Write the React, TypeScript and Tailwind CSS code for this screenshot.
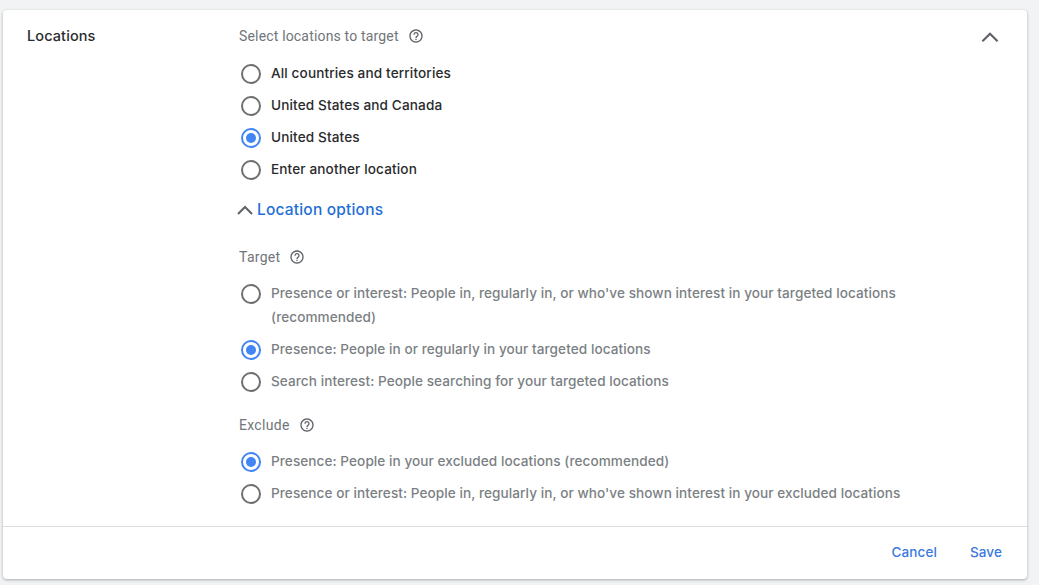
import React from "react";

function Help({ className = "" }: { className?: string }) {
  return (
    <svg width="16" height="16" viewBox="0 0 24 24" className={className} fill="#5f6368">
      <path d="M11 18h2v-2h-2v2zm1-16C6.48 2 2 6.48 2 12s4.48 10 10 10 10-4.48 10-10S17.52 2 12 2zm0 18c-4.41 0-8-3.59-8-8s3.59-8 8-8 8 3.59 8 8-3.59 8-8 8zm0-14c-2.21 0-4 1.79-4 4h2c0-1.1.9-2 2-2s2 .9 2 2c0 2-3 1.75-3 5h2c0-2.25 3-2.5 3-5 0-2.21-1.79-4-4-4z" />
    </svg>
  );
}

function Radio({ on }: { on?: boolean }) {
  return (
    <span
      className={`flex h-5 w-5 shrink-0 items-center justify-center rounded-full border-2 ${
        on ? "border-[#4285f4]" : "border-[#6f6f6f]"
      }`}
    >
      {on && <span className="h-2.5 w-2.5 rounded-full bg-[#4285f4]" />}
    </span>
  );
}

function Option({ label, on, dark }: { label: React.ReactNode; on?: boolean; dark?: boolean }) {
  return (
    <div className="flex items-start gap-[10px] pl-[2px]">
      <div className="flex h-8 items-center pt-[2px]">
        <Radio on={on} />
      </div>
      <div
        className={`py-1 font-['Inter',sans-serif] text-[13.6px] leading-6 font-medium ${
          dark ? "tracking-[0.12px] text-[#2a2b2e]" : "tracking-[0.06px] text-[#7b7f84]"
        }`}
      >
        {label}
      </div>
    </div>
  );
}

function Chevron({ size, stroke = 2 }: { size: number; stroke?: number }) {
  return (
    <svg width={size} height={size} viewBox="0 0 24 24" fill="none" stroke="#5f6368" strokeWidth={stroke}>
      <path d="M5 16l7-7 7 7" />
    </svg>
  );
}

export default function App() {
  return (
    <div className="h-[585px] w-[1039px] overflow-hidden bg-[#f1f3f4] pt-[10px] pl-[3px] font-['Roboto',sans-serif]">
      <div className="flex h-[569px] w-[1024px] flex-col rounded-[4px] bg-white shadow-[0_1px_3px_rgba(60,64,67,0.4)]">
        <div className="flex h-[516px] items-start">
          <div className="w-[236px] pt-[15px] pl-[24px] font-['Inter',sans-serif] text-[14.5px] leading-[22px] tracking-[0.1px] font-medium text-[#2a2b2e]">
            Locations
          </div>
          <div className="flex-1">
            <div className="flex items-center gap-[9px] pt-[15px] text-[14px] leading-[22px] tracking-[0.17px] text-[#70757a]">
              Select locations to target <Help />
            </div>
            <div className="mt-[10px] flex flex-col">
              <Option dark label="All countries and territories" />
              <Option dark label="United States and Canada" />
              <Option dark on label="United States" />
              <Option dark label="Enter another location" />
            </div>
            <div className="mt-[13px] flex h-6 items-center">
              <span className="-ml-[6px]">
                <Chevron size={24} />
              </span>
              <span className="font-['Inter',sans-serif] text-[15.5px] tracking-[0.19px] font-medium text-[#1f6fd6]">
                Location options
              </span>
            </div>
            <div className="mt-[24px] flex items-center gap-[9px] text-[14px] leading-[22px] tracking-[0.3px] text-[#70757a]">
              Target <Help />
            </div>
            <div className="mt-[9px] flex flex-col">
              <Option
                label={
                  <>
                    Presence or interest: People in, regularly in, or who've shown interest in your targeted locations
                    <br />
                    (recommended)
                  </>
                }
              />
              <Option on label="Presence: People in or regularly in your targeted locations" />
              <Option label="Search interest: People searching for your targeted locations" />
            </div>
            <div className="mt-[17px] flex items-center gap-[9px] text-[14px] leading-[22px] tracking-[0.3px] text-[#70757a]">
              Exclude <Help />
            </div>
            <div className="mt-[9px] flex flex-col">
              <Option on label="Presence: People in your excluded locations (recommended)" />
              <Option label="Presence or interest: People in, regularly in, or who've shown interest in your excluded locations" />
            </div>
          </div>
          <div className="pt-[14px] pr-[24px]">
            <Chevron size={26} />
          </div>
        </div>
        <div className="flex flex-1 items-center justify-end gap-[33px] border-t border-[#dadce0] pr-[25px] pb-[1px] font-['Inter',sans-serif] text-[13.5px] tracking-[0.1px] font-medium text-[#3b78e0]">
          <span>Cancel</span>
          <span>Save</span>
        </div>
      </div>
    </div>
  );
}
